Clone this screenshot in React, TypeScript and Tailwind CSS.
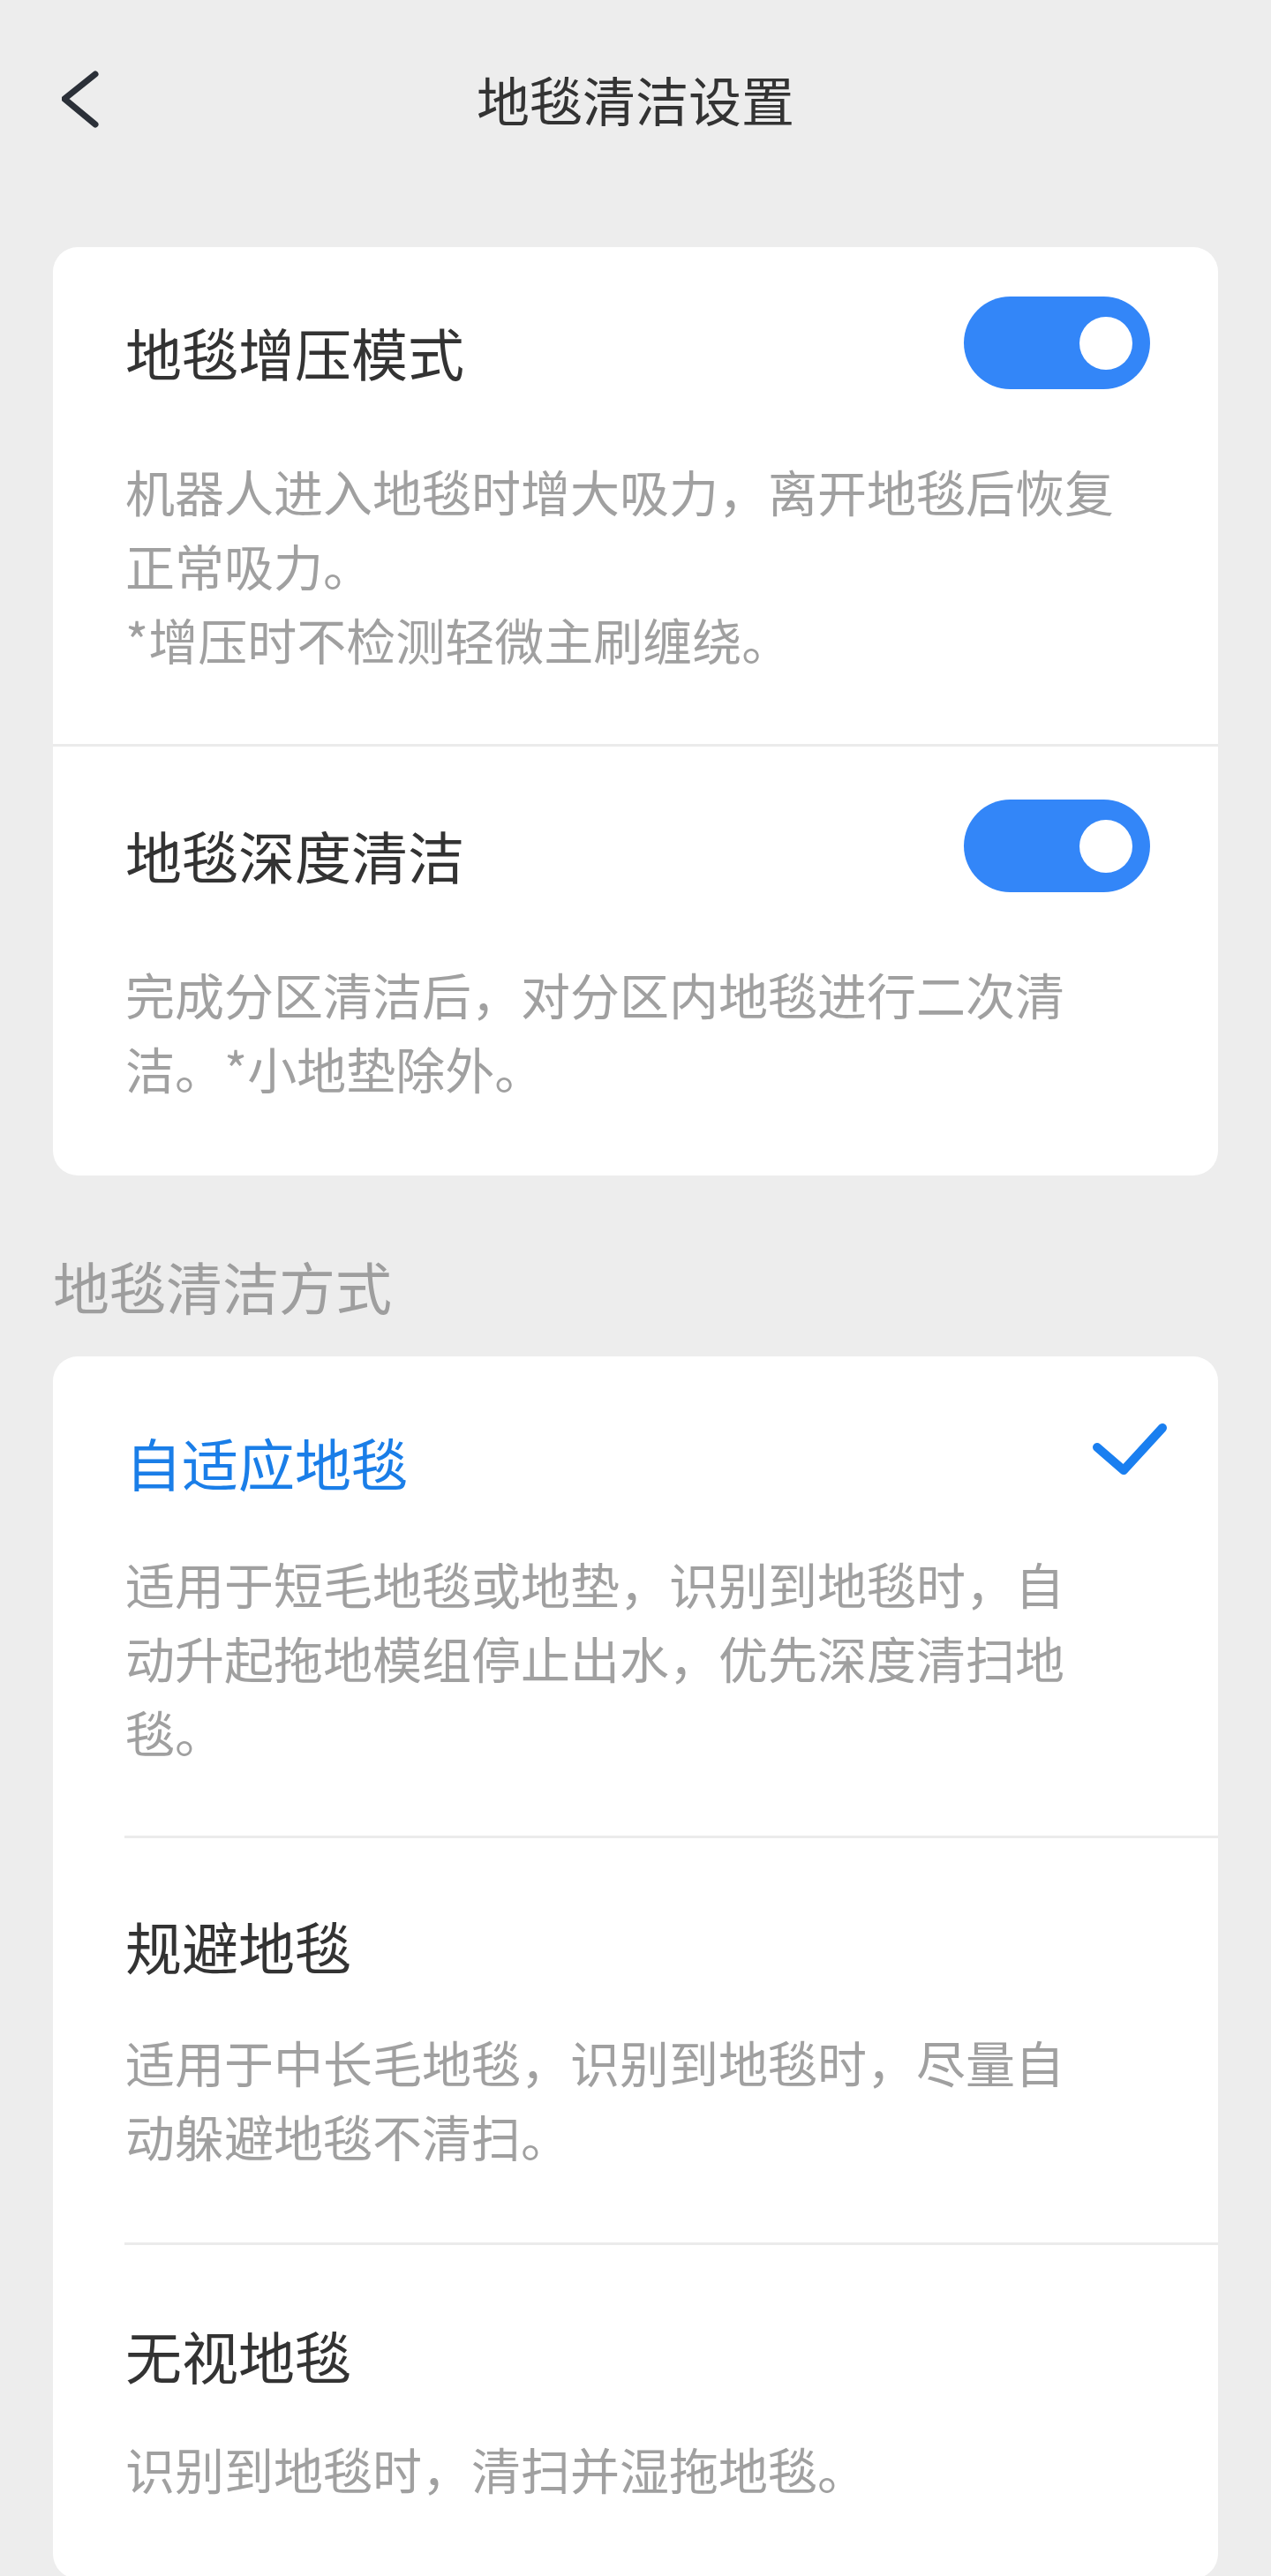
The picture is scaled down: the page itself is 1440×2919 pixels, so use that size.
import React from "react";

function Toggle() {
  return (
    <div className="flex h-[105px] w-[211px] shrink-0 items-center justify-end rounded-full bg-[#3386f8] pr-[20px]">
      <div className="h-[60px] w-[60px] rounded-full bg-white" />
    </div>
  );
}

function Check() {
  return (
    <svg width="88" height="64" viewBox="0 0 88 64" className="shrink-0">
      <polyline
        points="7,30 37,56 81,8"
        fill="none"
        stroke="#1a7ff0"
        strokeWidth="10"
        strokeLinecap="round"
        strokeLinejoin="round"
      />
    </svg>
  );
}

function Divider({ inset }: { inset?: boolean }) {
  return <div className={inset ? "ml-[81px] h-[3px] bg-[#ebebeb]" : "h-[3px] bg-[#ebebeb]"} />;
}

export default function App() {
  return (
    <div className="h-[2919px] w-full overflow-hidden bg-[#ededed] font-['Noto_Sans_CJK_SC','Noto_Sans',sans-serif]">
      {/* Header */}
      <div className="grid h-[224px] grid-cols-[1fr_auto_1fr] items-center">
        <div className="pl-[70px]">
          <svg width="42" height="65" viewBox="0 0 42 65">
            <polyline
              points="38,4 3,32 38,61"
              fill="none"
              stroke="#2b3038"
              strokeWidth="7"
              strokeLinecap="round"
              strokeLinejoin="round"
            />
          </svg>
        </div>
        <div className="text-[60px] leading-[64px] text-[#333333]">地毯清洁设置</div>
        <div />
      </div>

      <div className="px-[60px] pt-[56px]">
        {/* Card 1 */}
        <div className="rounded-[28px] bg-white">
          <div className="pl-[82px] pr-[77px] pt-[56px] pb-[77px]">
            <div className="flex items-start justify-between">
              <div className="mt-[30px] text-[64px] leading-[64px] text-[#333333]">地毯增压模式</div>
              <Toggle />
            </div>
            <div className="mt-[73px] max-w-[1140px] text-[56px] leading-[84px] text-[#a0a0a0]">
              <p>机器人进入地毯时增大吸力，离开地毯后恢复正常吸力。</p>
              <p>*增压时不检测轻微主刷缠绕。</p>
            </div>
          </div>
          <Divider />
          <div className="pl-[82px] pr-[77px] pt-[60px] pb-[80px]">
            <div className="flex items-start justify-between">
              <div className="mt-[30px] text-[64px] leading-[64px] text-[#333333]">地毯深度清洁</div>
              <Toggle />
            </div>
            <div className="mt-[73px] max-w-[1140px] text-[56px] leading-[84px] text-[#a0a0a0]">
              <p>完成分区清洁后，对分区内地毯进行二次清洁。*小地垫除外。</p>
            </div>
          </div>
        </div>

        {/* Section header */}
        <div className="mt-[92px] mb-[49px] text-[64px] leading-[64px] text-[#9e9e9e]">地毯清洁方式</div>

        {/* Card 2 */}
        <div className="rounded-[28px] bg-white">
          <div className="pl-[82px] pr-[56px] pt-[73px] pb-[76px]">
            <div className="flex items-start justify-between">
              <div className="mt-[14px] text-[64px] leading-[64px] text-[#1a7ee8]">自适应地毯</div>
              <Check />
            </div>
            <div className="mt-[64px] max-w-[1090px] text-[56px] leading-[84px] text-[#a0a0a0]">
              适用于短毛地毯或地垫，识别到地毯时，自动升起拖地模组停止出水，优先深度清扫地毯。
            </div>
          </div>
          <Divider inset />
          <div className="pl-[82px] pr-[56px] pt-[89px] pb-[79px]">
            <div className="text-[64px] leading-[64px] text-[#333333]">规避地毯</div>
            <div className="mt-[58px] max-w-[1090px] text-[56px] leading-[84px] text-[#a0a0a0]">
              适用于中长毛地毯，识别到地毯时，尽量自动躲避地毯不清扫。
            </div>
          </div>
          <Divider inset />
          <div className="pl-[82px] pr-[56px] pt-[92px] pb-[83px]">
            <div className="text-[64px] leading-[64px] text-[#333333]">无视地毯</div>
            <div className="mt-[55px] max-w-[1090px] text-[56px] leading-[84px] text-[#a0a0a0]">
              识别到地毯时，清扫并湿拖地毯。
            </div>
          </div>
        </div>
      </div>
    </div>
  );
}
